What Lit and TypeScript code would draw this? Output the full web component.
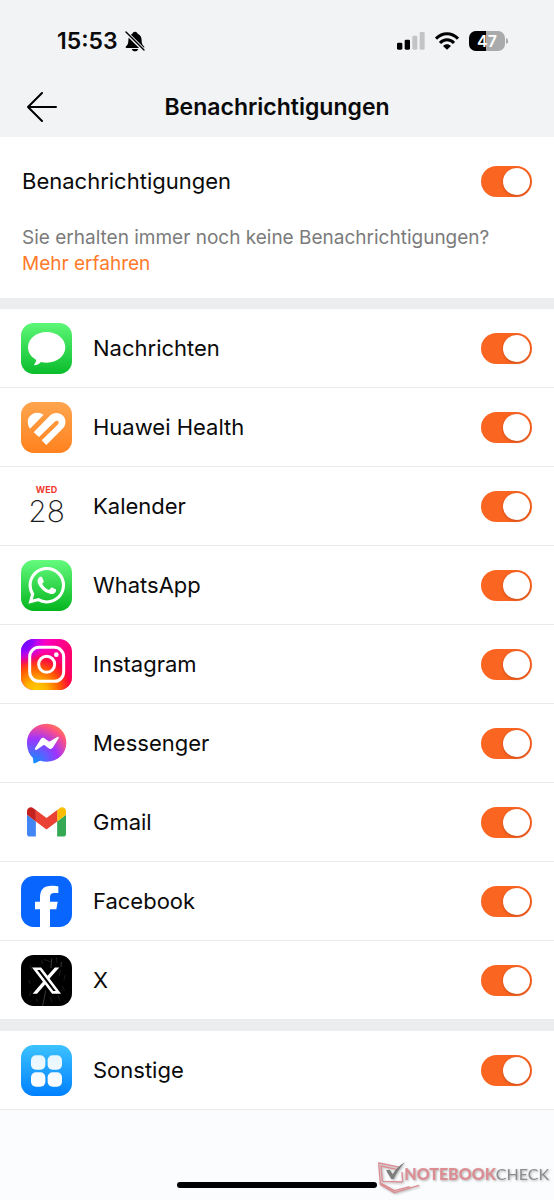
import { LitElement, html, svg, css, type TemplateResult } from "lit";
import { customElement, property, state } from "lit/decorators.js";

interface AppEntry {
  id: string;
  name: string;
  on: boolean;
}

/* Artwork is drawn on a 153 x 153 grid. */
const art: Record<string, TemplateResult> = {
  messages: svg`
    <defs><linearGradient id="g" x1="0" y1="0" x2="0" y2="1"><stop offset="0" stop-color="#5df777"/><stop offset="1" stop-color="#0abc2b"/></linearGradient></defs>
    <rect width="153" height="153" rx="38" fill="url(#g)"/>
    <path fill="#fff" d="M77 27c31 0 56 20 56 46s-25 46-56 46c-6 0-12-1-17-2-5 5-12 9-19 10-2 0-2-1-1-3 3-4 5-8 6-13C31 103 21 89 21 73c0-26 25-46 56-46z"/>`,
  health: svg`
    <defs><linearGradient id="g" x1="0" y1="0" x2="0" y2="1"><stop offset="0" stop-color="#ffa54e"/><stop offset="1" stop-color="#ff821e"/></linearGradient></defs>
    <rect width="153" height="153" rx="38" fill="url(#g)"/>
    <path fill="#fff" d="M27 80C20 71 18 56 24 46c9-16 29-18 44-8z"/>
    <path fill="#fff" d="M38 91L85 43c11-12 30-13 41-2 10 10 10 27 0 38l-50 50-14-14 48-47c4-4 4-8 1-11-3-2-7-1-10 2l-47 46z"/>`,
  whatsapp: svg`
    <defs><linearGradient id="g" x1="0" y1="0" x2="0" y2="1"><stop offset="0" stop-color="#65fb7e"/><stop offset="1" stop-color="#04b51e"/></linearGradient></defs>
    <rect width="153" height="153" rx="38" fill="url(#g)"/>
    <path fill="#fff" transform="translate(22 21) scale(4.6)" d="M17.472 14.382c-.297-.149-1.758-.867-2.03-.967-.273-.099-.471-.148-.67.15-.197.297-.767.966-.94 1.164-.173.199-.347.223-.644.075-.297-.15-1.255-.463-2.39-1.475-.883-.788-1.48-1.761-1.653-2.059-.173-.297-.018-.458.13-.606.134-.133.298-.347.446-.52.149-.174.198-.298.298-.497.099-.198.05-.371-.025-.52-.075-.149-.669-1.612-.916-2.207-.242-.579-.487-.5-.669-.51-.173-.008-.371-.01-.57-.01-.198 0-.52.074-.792.372-.272.297-1.04 1.016-1.04 2.479 0 1.462 1.065 2.875 1.213 3.074.149.198 2.096 3.2 5.077 4.487.709.306 1.262.489 1.694.625.712.227 1.36.195 1.871.118.571-.085 1.758-.719 2.006-1.413.248-.694.248-1.289.173-1.413-.074-.124-.272-.198-.57-.347m-5.421 7.403h-.004a9.87 9.87 0 01-5.031-1.378l-.361-.214-3.741.982.998-3.648-.235-.374a9.86 9.86 0 01-1.51-5.26c.001-5.45 4.436-9.884 9.888-9.884 2.64 0 5.122 1.03 6.988 2.898a9.825 9.825 0 012.893 6.994c-.003 5.45-4.437 9.884-9.885 9.884m8.413-18.297A11.815 11.815 0 0012.05 0C5.495 0 .16 5.335.157 11.892c0 2.096.547 4.142 1.588 5.945L.057 24l6.305-1.654a11.882 11.882 0 005.683 1.448h.005c6.554 0 11.89-5.335 11.893-11.893a11.821 11.821 0 00-3.48-8.413Z"/>`,
  instagram: svg`
    <defs>
      <linearGradient id="g" x1="0" y1="0" x2="1" y2="0.3"><stop offset="0" stop-color="#d300e6"/><stop offset="0.45" stop-color="#ff00c0"/><stop offset="1" stop-color="#ff0069"/></linearGradient>
      <radialGradient id="w" cx="0.3" cy="1.04" r="0.86"><stop offset="0" stop-color="#ffd000"/><stop offset="0.25" stop-color="#ffb400"/><stop offset="0.55" stop-color="#ff5a00"/><stop offset="0.78" stop-color="#ff0a38" stop-opacity="0.9"/><stop offset="1" stop-color="#ff0080" stop-opacity="0"/></radialGradient>
      <radialGradient id="b" cx="0.02" cy="0.02" r="0.5"><stop offset="0" stop-color="#5a0cff"/><stop offset="0.4" stop-color="#8a06ff"/><stop offset="1" stop-color="#e000f0" stop-opacity="0"/></radialGradient>
    </defs>
    <rect width="153" height="153" rx="38" fill="url(#g)"/>
    <rect width="153" height="153" rx="38" fill="url(#w)"/>
    <rect width="153" height="153" rx="38" fill="url(#b)"/>
    <rect x="26" y="25" width="102" height="102" rx="28" fill="none" stroke="#fff" stroke-width="9"/>
    <circle cx="77" cy="76" r="24" fill="none" stroke="#fff" stroke-width="9"/>
    <circle cx="106" cy="47" r="7" fill="#fff"/>`,
  messenger: svg`
    <defs><radialGradient id="g" cx="0.18" cy="1" r="1.08"><stop offset="0" stop-color="#0a94ff"/><stop offset="0.58" stop-color="#a033ff"/><stop offset="0.9" stop-color="#ff5280"/><stop offset="1" stop-color="#ff7061"/></radialGradient></defs>
    <path fill="url(#g)" d="M77 17c34 0 59 25 59 57s-25 57-59 57c-6 0-12-1-17-2-2-1-4 0-6 1l-12 6c-3 1-5 0-5-3l-1-11c0-2-1-3-2-4C24 108 18 92 18 74c0-32 25-57 59-57z"/>
    <path fill="#fff" d="M42 91l17-27c3-5 9-6 13-2l11 8c1 1 3 1 4 0l22-13c3-2 6 1 4 4L96 88c-3 5-9 6-13 3l-12-9c-1-1-3-1-4 0L47 95c-3 2-7-1-5-4z"/>`,
  gmail: svg`
    <g transform="translate(18 31) scale(1.33) translate(-52 -42)">
      <path fill="#4285f4" d="M58 108h14V74L52 59v43c0 3.32 2.69 6 6 6"/>
      <path fill="#34a853" d="M120 108h14c3.32 0 6-2.69 6-6V59l-20 15"/>
      <path fill="#fbbc04" d="M120 48v26l20-15v-8c0-7.42-8.47-11.65-14.4-7.2"/>
      <path fill="#ea4335" d="M72 74V48l24 18 24-18v26L96 92"/>
      <path fill="#c5221f" d="M52 51v8l20 15V48l-5.6-4.2c-5.94-4.45-14.4-.22-14.4 7.2"/>
    </g>`,
  facebook: svg`
    <rect width="153" height="153" rx="38" fill="#0866ff"/>
    <path fill="#fff" d="M57 153V100H42V77h15V66c0-26 11-37 36-37 8 0 14 1 19 2v20h-10c-11 0-15 4-15 14v12h23l-4 23H87v53z"/>`,
  x: svg`
    <rect width="153" height="153" rx="38" fill="#000"/>
    <g stroke="#fff" fill="none" stroke-linecap="round">
      <path stroke-opacity="0.35" stroke-width="2" d="M74 108l-9 44M92 12l-2 26M121 22l-1 12"/>
      <path stroke-opacity="0.18" stroke-width="2" d="M28 30l4 14M62 16l3 10M106 8l2 14M118 46l-3 16M132 62l-3 12M112 122l4 14M30 110l-4 12M46 132l3 8M88 128l4 12M70 14l18 6M124 94l6 12M24 76l3 9"/>
    </g>
    <path fill="#fff" transform="translate(33 33) scale(3.63)" d="M18.901 1.153h3.68l-8.04 9.19L24 22.846h-7.406l-5.8-7.584-6.638 7.584H.474l8.6-9.83L0 1.154h7.594l5.243 6.932ZM17.61 20.644h2.039L6.486 3.24H4.298Z"/>`,
  other: svg`
    <defs>
      <linearGradient id="g" x1="0" y1="0" x2="0" y2="1"><stop offset="0" stop-color="#3cc2ff"/><stop offset="1" stop-color="#0080ff"/></linearGradient>
      <linearGradient id="w" gradientUnits="userSpaceOnUse" x1="0" y1="30" x2="0" y2="125"><stop offset="0" stop-color="#e6f5ff"/><stop offset="1" stop-color="#fdfeff"/></linearGradient>
    </defs>
    <rect width="153" height="153" rx="38" fill="url(#g)"/>
    <g fill="url(#w)"><rect x="30" y="31" width="43" height="43" rx="15"/><rect x="80" y="31" width="43" height="43" rx="15"/><rect x="30" y="82" width="43" height="43" rx="15"/><rect x="80" y="82" width="43" height="43" rx="15"/></g>`,
};

@customElement("app-icon")
export class AppIcon extends LitElement {
  @property() name = "";

  static styles = css`
    :host { display: block; flex: none; width: 51px; height: 51px; }
    .art { display: block; width: 100%; height: 100%; }
    .calendar { display: flex; flex-direction: column; align-items: center; padding-top: 3px; }
    .weekday { font-size: 9px; line-height: 12px; font-weight: 700; color: #f0392f; }
    .day { font-size: 30px; line-height: 30px; font-weight: 200; color: #1c1c1e; }
  `;

  render() {
    if (this.name === "calendar") {
      return html`<div class="calendar"><span class="weekday">WED</span><span class="day">28</span></div>`;
    }
    return html`<svg class="art" viewBox="0 0 153 153" aria-hidden="true">${art[this.name]}</svg>`;
  }
}

@customElement("app-root")
export class AppRoot extends LitElement {
  @state() private allOn = true;
  @state() private apps: AppEntry[] = [
    { id: "messages", name: "Nachrichten", on: true },
    { id: "health", name: "Huawei Health", on: true },
    { id: "calendar", name: "Kalender", on: true },
    { id: "whatsapp", name: "WhatsApp", on: true },
    { id: "instagram", name: "Instagram", on: true },
    { id: "messenger", name: "Messenger", on: true },
    { id: "gmail", name: "Gmail", on: true },
    { id: "facebook", name: "Facebook", on: true },
    { id: "x", name: "X", on: true },
  ];
  @state() private other: AppEntry = { id: "other", name: "Sonstige", on: true };

  static styles = css`
    :host {
      display: flex;
      flex-direction: column;
      position: relative;
      min-height: 100vh;
      background: #fbfcfe;
      color: #0a0a0a;
      font-family: Inter, "Liberation Sans", sans-serif;
      font-size: 22px;
      line-height: 28px;
    }
    .top { background: #f1f3f5; }
    .status {
      display: flex;
      align-items: center;
      justify-content: space-between;
      height: 70px;
      padding: 6px 46px 0 57px;
    }
    .clock, .indicators { display: flex; align-items: center; }
    .clock { gap: 7px; font-size: 23px; font-weight: 600; }
    .indicators { gap: 10px; }
    .nav {
      display: grid;
      grid-template-columns: 44px 1fr 44px;
      align-items: center;
      height: 61px;
      padding: 0 20px;
    }
    .back { display: flex; justify-content: center; border: 0; padding: 7px; background: none; cursor: pointer; }
    .title { margin: 0; text-align: center; font-size: 23px; font-weight: 600; }
    .card { background: #fff; }
    .general { padding: 0 22px 21px; }
    .master { display: flex; align-items: center; height: 88px; }
    .name { flex: 1; }
    .hint { margin: 0; font-size: 19px; line-height: 26px; color: #7b7b7b; }
    .more { color: #ff7a2b; text-decoration: none; }
    .divider { height: 11px; background: #ecedef; }
    .list { margin: 0; padding: 0; list-style: none; }
    .row {
      display: flex;
      align-items: center;
      gap: 21px;
      height: 78px;
      padding: 0 22px 0 21px;
      border-bottom: 1px solid #ebebec;
    }
    .switch {
      appearance: none;
      flex: none;
      display: flex;
      width: 51px;
      height: 31px;
      margin: 0;
      padding: 2px;
      box-sizing: border-box;
      border-radius: 16px;
      background: #d5d6d8;
      cursor: pointer;
    }
    .switch::before {
      content: "";
      width: 27px;
      height: 27px;
      border-radius: 50%;
      background: #fff;
      box-shadow: 0 1px 3px rgba(120, 30, 0, 0.35);
    }
    .switch:checked { justify-content: flex-end; background: #fb6522; }
    .bottom {
      flex: 1;
      display: flex;
      align-items: flex-end;
      justify-content: center;
      padding-bottom: 12px;
    }
    .home { width: 36%; height: 6px; border-radius: 3px; background: #000; }
    .watermark {
      position: absolute;
      right: 5px;
      bottom: 5px;
      display: flex;
      align-items: flex-start;
      font-family: Lato, "Liberation Sans", sans-serif;
      font-size: 16px;
      line-height: 26px;
      color: #8b8b8b;
      filter: drop-shadow(1px 1px 1px rgba(0, 0, 0, 0.3));
    }
    .laptop { margin-right: -16px; }
    .brand { font-weight: 900; color: #dc8d92; }
  `;

  private toggleApp(id: string) {
    this.apps = this.apps.map((a) => (a.id === id ? { ...a, on: !a.on } : a));
  }

  private row(app: AppEntry, toggle: () => void) {
    return html`
      <label class="row">
        <app-icon name=${app.id}></app-icon>
        <span class="name">${app.name}</span>
        <input class="switch" type="checkbox" role="switch" .checked=${app.on} @change=${toggle} />
      </label>
    `;
  }

  render() {
    return html`
      <header class="top">
        <div class="status">
          <div class="clock">
            <span>15:53</span>
            <svg width="20" height="21" viewBox="0 0 60 63" aria-hidden="true">
              <path d="M30 2c5 0 7 3 8 6 9 4 12 11 12 21 0 9 3 13 7 17 2 3 1 5-2 5H5c-3 0-4-2-2-5 4-4 7-8 7-17 0-10 3-17 12-21 1-3 3-6 8-6zM20 54h20c-2 5-5 7-10 7s-8-2-10-7z"/>
              <path d="M-2-1L62 63" stroke="#f1f3f5" stroke-width="11"/>
              <path d="M3 3l54 54" stroke="#000" stroke-width="4" stroke-linecap="round"/>
            </svg>
          </div>
          <div class="indicators">
            <svg width="28" height="18" viewBox="0 0 84 54" aria-hidden="true">
              <rect y="32" width="16" height="21" rx="4"/>
              <rect x="23" y="23" width="16" height="30" rx="4"/>
              <g fill="#c3c4c6"><rect x="46" y="11" width="15" height="42" rx="4"/><rect x="68" width="15" height="53" rx="4"/></g>
            </svg>
            <svg width="24" height="18" viewBox="0 0 72 54" aria-hidden="true">
              <g fill="none" stroke="#000" stroke-width="9"><path d="M3 20c19-20 47-20 66 0"/><path d="M15 33c12-13 30-13 42 0"/></g>
              <path d="M36 53L24 42c7-7 17-7 24 0z"/>
            </svg>
            <svg width="39" height="20" viewBox="0 0 39 20" role="img" aria-label="Akku 47 %">
              <rect width="36" height="20" rx="7" fill="#a9aaac"/>
              <path d="M7 0h10v20H7a7 7 0 0 1-7-7V7a7 7 0 0 1 7-7z"/>
              <path d="M37 7c3 1 3 5 0 6z" fill="#a9aaac"/>
              <text x="18" y="16" text-anchor="middle" font-size="16" font-weight="600" fill="#fff">47</text>
            </svg>
          </div>
        </div>
        <nav class="nav">
          <button class="back" type="button" aria-label="Zurück">
            <svg width="30" height="30" viewBox="0 0 30 30" fill="none" stroke="#000" stroke-width="2" stroke-linecap="round" stroke-linejoin="round"><path d="M15 1L1 15l14 14M1 15h28"/></svg>
          </button>
          <h1 class="title">Benachrichtigungen</h1>
        </nav>
      </header>
      <main>
        <section class="card general">
          <label class="master">
            <span class="name">Benachrichtigungen</span>
            <input class="switch" type="checkbox" role="switch" .checked=${this.allOn} @change=${() => (this.allOn = !this.allOn)} />
          </label>
          <p class="hint">Sie erhalten immer noch keine Benachrichtigungen?<br /><a class="more" href="#hilfe">Mehr erfahren</a></p>
        </section>
        <div class="divider"></div>
        <ul class="card list">
          ${this.apps.map((app) => html`<li>${this.row(app, () => this.toggleApp(app.id))}</li>`)}
        </ul>
        <div class="divider"></div>
        <section class="card">
          ${this.row(this.other, () => (this.other = { ...this.other, on: !this.other.on }))}
        </section>
      </main>
      <footer class="bottom">
        <div class="home"></div>
        <div class="watermark">
          <svg class="laptop" width="43" height="34" viewBox="0 0 129 102" fill="none" aria-hidden="true">
            <g stroke="#dc8d92" stroke-width="4" stroke-linejoin="round"><path d="M10 66L5 6l64 13M75 33l2 30M16 61l-4-46 50 11M16 61l60 2M10 70l42 25 74-22M10 70l-1-5M12 67l40 22 46-12"/></g>
            <path fill="#7d7d7d" d="M27 28l11-2 9 14C55 26 66 14 84 4 71 18 58 35 50 54h-7z"/>
          </svg>
          <span><span class="brand">NOTEBOOK</span>CHECK</span>
        </div>
      </footer>
    `;
  }
}
